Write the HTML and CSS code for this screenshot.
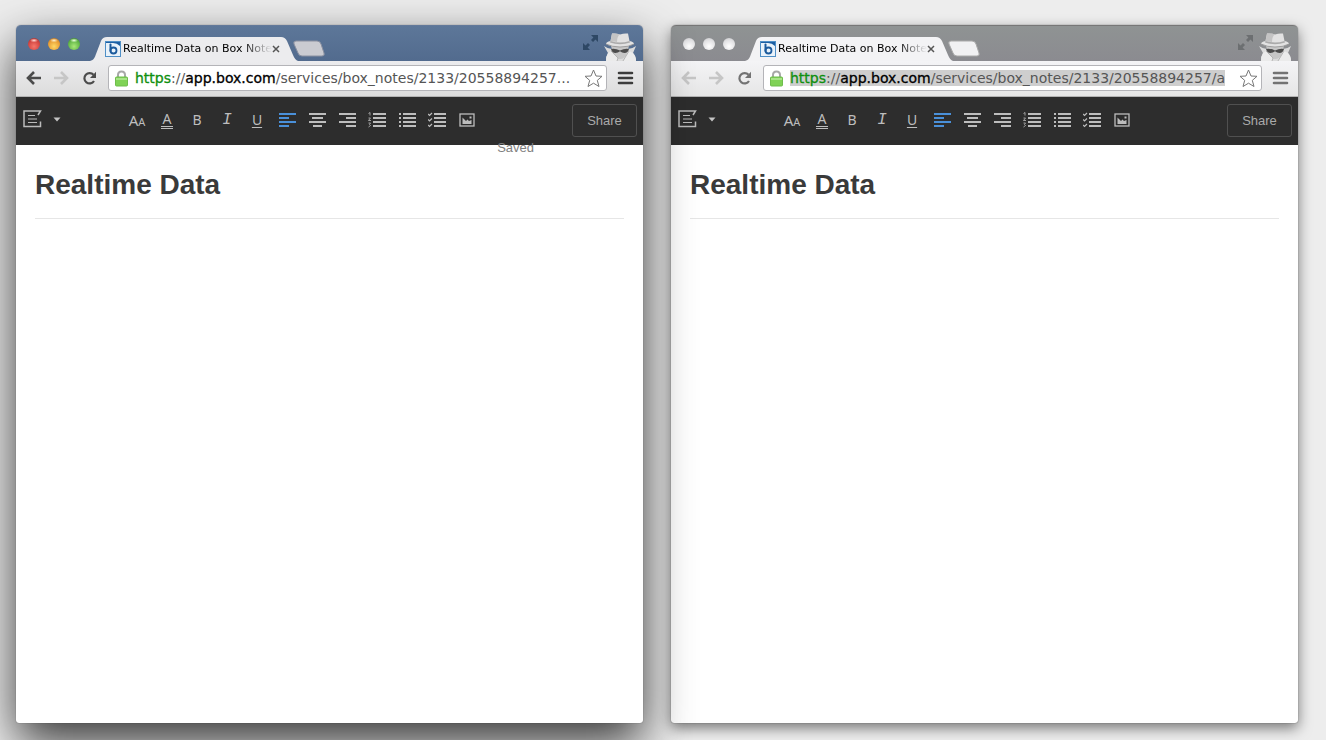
FILE: index.html
```html
<!DOCTYPE html>
<html lang="en">
<head>
<meta charset="utf-8">
<title>Realtime Data on Box Notes</title>
<link rel="stylesheet" href="styles.css">
</head>
<body>
<svg class="sprite" aria-hidden="true">
  <symbol id="tab-shape" viewBox="0 0 208 24"><path d="M0 24C4 23 5 20 6 17L11 4Q12.500 0 17 0H191Q195 0 197 4L203 18Q205 23 208 24Z"/></symbol>
  <symbol id="new-tab" viewBox="0 0 32 18"><path d="M3 1H24Q27 1 28 4L31 13Q32 16 29 16H9Q6 16 5 13L1 4Q0 1 3 1Z"/></symbol>
  <symbol id="favicon" viewBox="0 0 16 16"><rect x=".5" y=".5" width="15" height="15" fill="#e9f2fa" stroke="#4f8fc6"/><path d="M1 1H15V5Q12 2 8 2H1Z" fill="#1d5fa3"/><path d="M5.500 3.500V10" stroke="#1b5a9c" stroke-width="2" stroke-linecap="round"/><circle cx="8.500" cy="9.500" r="3" fill="none" stroke="#1b5a9c" stroke-width="1.800"/></symbol>
  <symbol id="close" viewBox="0 0 8 8"><path d="M1 1L7 7M7 1L1 7" stroke="#555" stroke-width="1.500"/></symbol>
  <symbol id="expand" viewBox="0 0 15 15"><path d="M8 0H15V7L12.500 4.600L10 7L8 5L10.400 2.500ZM7 15H0V8L2.500 10.400L5 8L7 10L4.600 12.500Z"/></symbol>
  <symbol id="spy" viewBox="0 0 34 29"><path d="M1 14Q5 17 9 17L17 21L25 17Q29 17 33 14L30 21Q33 24 33 29H3Q3 24 5 21Z" fill="#dcdcdc"/><path d="M8 14H26L24 21Q22 27 17 27Q12 27 10 21Z" fill="#c6c6c6"/><path d="M8 17Q12 16 17 18.500Q22 16 26 17Q25 21 21.500 21Q19 21 17 19.200Q15 21 12.500 21Q9 21 8 17Z" fill="#4c4c4c"/><path d="M5 21L8 19L15 26L14 29H3Q3 24 5 21ZM20 29L26 19L30 21Q33 24 33 29Z" fill="#ebebeb"/><path d="M8 19L15 26L14 29M26 19L20 29" fill="none" stroke="#aaa" stroke-width=".8"/><path d="M9 1.500Q13 1 17 2.500Q21 1 25 1.500L26.500 9Q31 10 31 12Q26 15 17 15Q8 15 3 12Q3 10 7.500 9Z" fill="#e2e2e2"/><path d="M9 1.500Q13 1 17 2.500Q14 4 14 10L7.500 9Z" fill="#c4c4c4"/><path d="M7.500 9Q17 12 26.500 9L27 10.500Q17 14 7 10.500Z" fill="#aaa"/><path d="M3 12Q9 15 17 15Q26 15 31 12" fill="none" stroke="#8f8f8f" stroke-width=".8"/></symbol>
  <symbol id="arrow" viewBox="0 0 16 14"><path d="M15 7H2M8 1L2 7L8 13" fill="none" stroke="currentColor" stroke-width="2.600"/></symbol>
  <symbol id="reload" viewBox="0 0 15 15"><path d="M11.500 3.800A5.200 5.200 0 1 0 12 10" fill="none" stroke="currentColor" stroke-width="2.200"/><path d="M14 .8V7H8Z" fill="currentColor"/></symbol>
  <symbol id="lock" viewBox="0 0 13 17"><path d="M3 8V5Q3 1.500 6.500 1.500Q10 1.500 10 5V8" fill="none" stroke="#a8a8a8" stroke-width="2"/><rect x=".5" y="7" width="12" height="9" rx="1" fill="#7fd255" stroke="#6fbd4c"/><path d="M1 8H12V10H1Z" fill="#a8e487"/></symbol>
  <symbol id="star" viewBox="0 0 19 19"><path d="M9.500 1L12 7L18 7.300L13.300 11.400L15 17.500L9.500 14.200L4 17.500L5.700 11.400L1 7.300L7 7Z" fill="#fff" stroke="#777" stroke-linejoin="round"/></symbol>
  <symbol id="menu" viewBox="0 0 17 14"><path d="M2 2H15M2 7H15M2 12H15" stroke="currentColor" stroke-width="2.600" stroke-linecap="round"/></symbol>
  <symbol id="note" viewBox="0 0 19 18"><path d="M15 5L17.500 1H1V16.500H17.500V11.500" fill="none" stroke="#bbb" stroke-width="1.500"/><path d="M5 5.500H12M5 9H14M5 12.500H14" stroke="#bbb" stroke-width="1.200"/></symbol>
  <symbol id="caret" viewBox="0 0 8 5"><path d="M.5 .5H7.500L4 4.500Z" fill="#c4c4c4"/></symbol>
  <symbol id="left" viewBox="0 0 17 16"><path d="M0 2H17M0 6H10M0 10H17M0 14H10" stroke="currentColor" stroke-width="1.800"/></symbol>
  <symbol id="center" viewBox="0 0 17 16"><path d="M0 2H17M3 6H14M0 10H17M4 14H13" stroke="currentColor" stroke-width="1.800"/></symbol>
  <symbol id="right" viewBox="0 0 17 16"><path d="M0 2H17M7 6H17M0 10H17M7 14H17" stroke="currentColor" stroke-width="1.800"/></symbol>
  <symbol id="numbers" viewBox="0 0 18 16"><path d="M5 2H18M5 6H18M5 10H18M5 14H18" stroke="currentColor" stroke-width="2"/><path d="M.5 1.500L2 .5V3.500M.5 6H2.500L.5 8.500H3M.5 11H2.500L1.500 12.500L2.500 13.500L.5 15" fill="none" stroke="currentColor" stroke-width=".8"/></symbol>
  <symbol id="bullets" viewBox="0 0 18 16"><path d="M5 2H18M5 6H18M5 10H18M5 14H18M1 2H3M1 6H3M1 10H3M1 14H3" stroke="currentColor" stroke-width="2"/></symbol>
  <symbol id="checks" viewBox="0 0 18 16"><path d="M6 2H18M6 6H18M6 10H18M6 14H18" stroke="currentColor" stroke-width="2"/><path d="M0 2L1.500 3.500L4 1M0 7.500L1.500 9L4 6.500M0 13L1.500 14.500L4 12" fill="none" stroke="currentColor" stroke-width="1.200"/></symbol>
  <symbol id="image" viewBox="0 0 16 14"><rect x="1" y="1" width="14" height="12" fill="none" stroke="currentColor" stroke-width="1.300"/><path d="M3.500 11V4.500L7 8L8.500 6.500L10 8L12.500 7V11Z" fill="currentColor"/><path d="M10.500 3.500H12.500V5.500H10.500Z" fill="currentColor"/></symbol>
</svg>

<main class="desktop">
  <section class="window active" aria-label="Active browser window">
    <header class="titlebar">
      <div class="lights"><button class="light red" aria-label="Close"></button><button class="light amber" aria-label="Minimize"></button><button class="light green" aria-label="Zoom"></button></div>
      <div class="tab"><svg class="tab-bg"><use href="#tab-shape"/></svg><svg class="favicon"><use href="#favicon"/></svg><span class="tab-title">Realtime Data on Box Note</span><button class="tab-close" aria-label="Close tab"><svg><use href="#close"/></svg></button></div>
      <button class="new-tab" aria-label="New tab"><svg><use href="#new-tab"/></svg></button>
      <button class="expand" aria-label="Full screen"><svg><use href="#expand"/></svg></button>
      <svg class="spy"><use href="#spy"/></svg>
    </header>
    <nav class="navbar">
      <button class="nav-btn back" aria-label="Back"><svg><use href="#arrow"/></svg></button>
      <button class="nav-btn forward" aria-label="Forward" disabled><svg><use href="#arrow"/></svg></button>
      <button class="nav-btn reload" aria-label="Reload"><svg><use href="#reload"/></svg></button>
      <div class="omnibox"><svg class="lock"><use href="#lock"/></svg><div class="url" role="textbox" contenteditable="true" spellcheck="false" aria-label="Address"><span class="address"><span class="scheme">https</span>://<span class="host">app.box.com</span>/services/box_notes/2133/20558894257...</span></div><button class="star" aria-label="Bookmark"><svg><use href="#star"/></svg></button></div>
      <button class="nav-btn menu" aria-label="Menu"><svg><use href="#menu"/></svg></button>
    </nav>
    <div class="editor-bar" role="toolbar" aria-label="Formatting">
      <button class="note-menu" aria-label="Notes menu"><svg class="note-icon"><use href="#note"/></svg><svg class="caret"><use href="#caret"/></svg></button>
      <div class="tools">
        <button class="tool size" aria-label="Font size">A<small>A</small></button>
        <button class="tool color" aria-label="Text color"><span>A</span></button>
        <button class="tool" aria-label="Bold">B</button>
        <button class="tool italic" aria-label="Italic">I</button>
        <button class="tool under" aria-label="Underline">U</button>
        <button class="tool on" aria-label="Align left"><svg class="align"><use href="#left"/></svg></button>
        <button class="tool" aria-label="Align center"><svg class="align"><use href="#center"/></svg></button>
        <button class="tool" aria-label="Align right"><svg class="align"><use href="#right"/></svg></button>
        <button class="tool" aria-label="Numbered list"><svg class="list"><use href="#numbers"/></svg></button>
        <button class="tool" aria-label="Bulleted list"><svg class="list"><use href="#bullets"/></svg></button>
        <button class="tool" aria-label="Check list"><svg class="list"><use href="#checks"/></svg></button>
        <button class="tool" aria-label="Insert image"><svg class="pic"><use href="#image"/></svg></button>
      </div>
      <button class="share">Share</button>
      <span class="saved" role="status">Saved</span>
    </div>
    <article class="note"><h1>Realtime Data</h1></article>
  </section>

  <section class="window inactive" aria-label="Background browser window">
    <header class="titlebar">
      <div class="lights"><button class="light" aria-label="Close"></button><button class="light" aria-label="Minimize"></button><button class="light" aria-label="Zoom"></button></div>
      <div class="tab"><svg class="tab-bg"><use href="#tab-shape"/></svg><svg class="favicon"><use href="#favicon"/></svg><span class="tab-title">Realtime Data on Box Note</span><button class="tab-close" aria-label="Close tab"><svg><use href="#close"/></svg></button></div>
      <button class="new-tab" aria-label="New tab"><svg><use href="#new-tab"/></svg></button>
      <button class="expand" aria-label="Full screen"><svg><use href="#expand"/></svg></button>
      <svg class="spy"><use href="#spy"/></svg>
    </header>
    <nav class="navbar">
      <button class="nav-btn back" aria-label="Back" disabled><svg><use href="#arrow"/></svg></button>
      <button class="nav-btn forward" aria-label="Forward" disabled><svg><use href="#arrow"/></svg></button>
      <button class="nav-btn reload" aria-label="Reload"><svg><use href="#reload"/></svg></button>
      <div class="omnibox"><svg class="lock"><use href="#lock"/></svg><div class="url" role="textbox" contenteditable="true" spellcheck="false" aria-label="Address"><span class="address selected"><span class="scheme">https</span>://<span class="host">app.box.com</span>/services/box_notes/2133/20558894257/a</span></div><button class="star" aria-label="Bookmark"><svg><use href="#star"/></svg></button></div>
      <button class="nav-btn menu" aria-label="Menu"><svg><use href="#menu"/></svg></button>
    </nav>
    <div class="editor-bar" role="toolbar" aria-label="Formatting">
      <button class="note-menu" aria-label="Notes menu"><svg class="note-icon"><use href="#note"/></svg><svg class="caret"><use href="#caret"/></svg></button>
      <div class="tools">
        <button class="tool size" aria-label="Font size">A<small>A</small></button>
        <button class="tool color" aria-label="Text color"><span>A</span></button>
        <button class="tool" aria-label="Bold">B</button>
        <button class="tool italic" aria-label="Italic">I</button>
        <button class="tool under" aria-label="Underline">U</button>
        <button class="tool on" aria-label="Align left"><svg class="align"><use href="#left"/></svg></button>
        <button class="tool" aria-label="Align center"><svg class="align"><use href="#center"/></svg></button>
        <button class="tool" aria-label="Align right"><svg class="align"><use href="#right"/></svg></button>
        <button class="tool" aria-label="Numbered list"><svg class="list"><use href="#numbers"/></svg></button>
        <button class="tool" aria-label="Bulleted list"><svg class="list"><use href="#bullets"/></svg></button>
        <button class="tool" aria-label="Check list"><svg class="list"><use href="#checks"/></svg></button>
        <button class="tool" aria-label="Insert image"><svg class="pic"><use href="#image"/></svg></button>
      </div>
      <button class="share">Share</button>
    </div>
    <article class="note"><h1>Realtime Data</h1></article>
  </section>
</main>
</body>
</html>
```
FILE: styles.css
```css
* { box-sizing: border-box; }
body { margin: 0; background: #ededed; font-family: "Liberation Sans", Arial, sans-serif; overflow: hidden; }
button { margin: 0; padding: 0; border: 0; background: none; color: inherit; font: inherit; }
svg { display: block; flex: none; }
.sprite { position: absolute; width: 0; height: 0; }

.desktop { display: flex; gap: 28px; min-height: 100vh; padding: 25px 28px 17px 16px; }
.window { display: flex; flex: 1; flex-direction: column; min-width: 0; border-radius: 5px 5px 3px 3px; background: #fff; }
.active { position: relative; z-index: 1; box-shadow: 0 0 1px rgba(0,0,0,.6), 0 20px 48px rgba(0,0,0,.76); }
.inactive { box-shadow: 0 0 1px rgba(0,0,0,.7), 0 5px 14px rgba(0,0,0,.5); }

.titlebar { display: flex; height: 36px; padding: 0 6px 0 12px; border-radius: 5px 5px 0 0; background: linear-gradient(#5d7799, #526b8e); border-top: 1px solid #63799a; }
.inactive .titlebar { background: linear-gradient(#8f9393, #8b8b90); border-top-color: #777; }
.lights { display: flex; gap: 8px; padding-top: 12px; width: 62px; }
.light { width: 12px; height: 12px; border-radius: 50%; background: radial-gradient(circle at 50% 70%, #fff, #e1e1e3 60%, #c4c4c8); }
.light.red { background: radial-gradient(ellipse 4px 2px at 50% 20%, #ffdcd6, transparent), radial-gradient(circle at 50% 70%, #f5756a, #d0433f 60%, #8a302f); }
.light.amber { background: radial-gradient(ellipse 4px 2px at 50% 20%, #fff3d0, transparent), radial-gradient(circle at 50% 70%, #ffd865, #e79a32 60%, #97602c); }
.light.green { background: radial-gradient(ellipse 4px 2px at 50% 20%, #edffe0, transparent), radial-gradient(circle at 50% 70%, #a8e878, #5fb445 60%, #38702f); }

.tab { position: relative; display: flex; align-items: center; width: 208px; height: 24px; margin-top: 11px; padding: 0 18px 0 15px; }
.tab-bg { position: absolute; inset: 0; width: 208px; height: 24px; fill: #ececee; }
.inactive .tab-bg { fill: #f3f3f5; }
.favicon { position: relative; width: 16px; height: 16px; }
.tab-title { position: relative; flex: 1; margin-left: 2px; overflow: hidden; white-space: nowrap; font: 11px/16px "DejaVu Sans", sans-serif; color: #000; mask-image: linear-gradient(to right, #000 80%, transparent); }
.tab-close { position: relative; }
.tab-close svg { width: 8px; height: 8px; }
.new-tab svg { width: 32px; height: 18px; fill: #cacbd1; stroke: #8a90a0; }
.new-tab { margin: 14px auto 0 -5px; align-self: flex-start; }
.inactive .new-tab svg { fill: #f1f1f3; stroke: #aaa; }
.expand { align-self: flex-start; margin: 9px 5px 0 0; }
.expand svg { width: 15px; height: 15px; fill: #2e4865; }
.inactive .expand svg { fill: #6c6f71; }
.spy { width: 34px; height: 29px; align-self: flex-end; }

.navbar { display: flex; align-items: center; height: 36px; padding: 0 9px 1px; background: linear-gradient(#ececee, #dcdcdc); border-bottom: 1px solid #b3b3b3; color: #4b4b4b; }
.inactive .navbar { background: linear-gradient(#f4f4f6, #e6e6e6); color: #737373; }
.nav-btn { display: grid; place-items: center; width: 28px; height: 28px; flex: none; }
.nav-btn svg { width: 16px; height: 14px; }
.nav-btn:disabled { color: #c6c6c6; }
.back { width: 18px; }
.forward { width: 36px; }
.forward svg { transform: rotate(180deg); }
.nav-btn.reload { width: 21px; }
.reload svg { width: 15px; height: 15px; }
.menu { width: 17px; margin-left: 10px; }
.menu svg { width: 17px; height: 14px; }
.active .menu { color: #3c3c3c; }
.omnibox { display: flex; align-items: center; flex: 1; min-width: 0; height: 26px; margin-left: 8px; padding: 0 3px 0 6px; border: 1px solid #b4b4b8; border-radius: 3px; background: #fff; }
.lock { width: 13px; height: 17px; }
.url { flex: 1; min-width: 0; margin-left: 7px; overflow: hidden; white-space: nowrap; font: 14px/18px "DejaVu Sans", sans-serif; color: #555; outline: 0; }
.scheme { color: #0f8f0f; -webkit-text-stroke: 0.3px #0f8f0f; }
.host { color: #000; -webkit-text-stroke: 0.3px #000; }
.selected { background: #cecece; }
.star svg { width: 19px; height: 19px; }

.editor-bar { position: relative; display: flex; align-items: center; height: 48px; padding: 0 6px 2px 7px; background: #2d2d2d; color: #bdbdbd; }
.note-menu { display: flex; align-items: center; gap: 11px; width: 99px; padding-bottom: 2px; }
.note-icon { width: 19px; height: 18px; }
.caret { width: 8px; height: 5px; }
.tools { display: flex; flex: 1; }
.tool { display: grid; place-items: center; width: 30px; height: 30px; font: 14px/16px "Noto Sans", sans-serif; }
.size { display: flex; align-items: baseline; justify-content: center; padding-top: 7px; font-size: 15px; }
.size small { font-size: 11px; }
.color span { height: 18px; padding: 0 2px; border-bottom: 3px double #bdbdbd; }
.italic { font: italic 16px/16px "Liberation Mono", monospace; }
.under { text-decoration: underline; text-underline-offset: 2px; }
.on { color: #4a90d9; }
.align { width: 17px; height: 16px; }
.list { width: 18px; height: 16px; }
.pic { width: 16px; height: 14px; }
.share { width: 65px; height: 33px; border: 1px solid #505050; border-radius: 3px; font-size: 13px; color: #aaa; }
.saved { position: absolute; top: 43px; right: 109px; font-size: 13px; line-height: 16px; color: #808080; }

.note { flex: 1; padding: 22px 19px 0; }
.note h1 { margin: 0; padding-bottom: 15px; border-bottom: 1px solid #e6e6e6; font-size: 28px; line-height: 36px; color: #3a3a3a; }
```
